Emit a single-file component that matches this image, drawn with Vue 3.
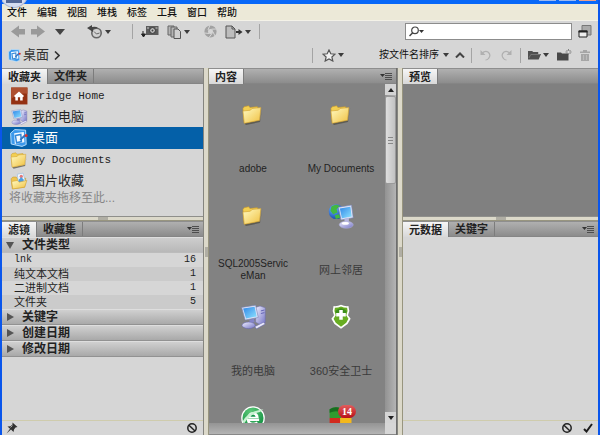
<script setup>
import { ref } from 'vue'

const menus = ['文件', '编辑', '视图', '堆栈', '标签', '工具', '窗口', '帮助']
const favorites = [
  { name: 'Bridge Home', icon: 'home', latin: true },
  { name: '我的电脑', icon: 'computer' },
  { name: '桌面', icon: 'desktop' },
  { name: 'My Documents', icon: 'documents', latin: true },
  { name: '图片收藏', icon: 'pictures' }
]
const selected = ref('桌面')
const types = [
  { name: 'lnk', count: 16, latin: true },
  { name: '纯文本文档', count: 1 },
  { name: '二进制文档', count: 1 },
  { name: '文件夹', count: 5 }
]
const closedGroups = ['关键字', '创建日期', '修改日期']
const files = [
  { name: 'adobe', icon: 'folder' },
  { name: 'My Documents', icon: 'folder' },
  { name: 'SQL2005ServiceMan', icon: 'folder' },
  { name: '网上邻居', icon: 'network', cjk: true },
  { name: '我的电脑', icon: 'computer', cjk: true },
  { name: '360安全卫士', icon: 'shield', cjk: true },
  { name: '', icon: 'browser' },
  { name: '', icon: 'blocks', badge: 14 }
]
const query = ref('')
</script>

<template>
  <div class="window">
    <svg class="defs" aria-hidden="true">
      <defs>
        <linearGradient id="gFolder" x1="0" y1="0" x2="1" y2="1">
          <stop offset="0" stop-color="#fffbc4" /><stop offset="1" stop-color="#f0c040" />
        </linearGradient>
        <linearGradient id="gScreen" x1="0" y1="0" x2="1" y2="1">
          <stop offset="0" stop-color="#2f86e8" /><stop offset="1" stop-color="#8fe4ff" />
        </linearGradient>
        <linearGradient id="gCase" x1="0" y1="0" x2="1" y2="1">
          <stop offset="0" stop-color="#f0f0ff" /><stop offset="1" stop-color="#7474c4" />
        </linearGradient>
        <radialGradient id="gGlobe" cx="0.35" cy="0.3" r="0.8">
          <stop offset="0" stop-color="#6fb8ff" /><stop offset="1" stop-color="#0b3fa8" />
        </radialGradient>
        <radialGradient id="gGreen" cx="0.4" cy="0.2" r="0.9">
          <stop offset="0" stop-color="#5cc878" /><stop offset="1" stop-color="#0b8a3c" />
        </radialGradient>
        <g id="folderArt">
          <path d="M7 25.500 L25 22 L27.500 8 L25 24 L9 27.500z" fill="#4c4a40" opacity="0.7" />
          <path d="M5.500 8.500 L7 6.500 L12 5.500 L13.500 7.500 L22 6.500 L23 10 L22 22 L7 25z" fill="#f3cf52" stroke="#c89a2c" stroke-width="0.700" />
          <path d="M5.500 11.500 L14 10.500 L16 8.500 L26 7.500 L24.500 22 L7 25.500z" fill="url(#gFolder)" stroke="#d0a030" stroke-width="0.700" />
        </g>
      </defs>
      <symbol id="folder" viewBox="1 0 32 32"><use href="#folderArt" /></symbol>
      <symbol id="documents" viewBox="4 3 25 25"><use href="#folderArt" /></symbol>
      <symbol id="computer" viewBox="0 0 32 32">
        <path d="M19 5 L24 3.500 L30 5.500 V22 L25 25 L19 22z" fill="url(#gCase)" stroke="#6d6dab" stroke-width="0.600" />
        <path d="M25 9 L29 8 M25 12 L29 11" stroke="#5a5ab0" />
        <path d="M3 5 L19 2.500 L22 16.500 L7 19.500z" fill="#dfe4f8" stroke="#7783b5" stroke-width="0.700" />
        <path d="M4.700 6.300 L17.800 4.200 L20.200 15.300 L8 17.800z" fill="url(#gScreen)" />
        <path d="M12 19 L17 18 L18 22 L12 23z" fill="#8484c8" />
        <ellipse cx="11" cy="25.500" rx="7.500" ry="3.700" fill="url(#gCase)" stroke="#6464b2" stroke-width="0.600" />
        <path d="M18 27 L28 22 L30 24 L20 29.500z" fill="#e9e9fa" stroke="#6464b2" stroke-width="0.600" />
      </symbol>
      <symbol id="network" viewBox="0 0 32 32">
        <circle cx="10.500" cy="11" r="8.500" fill="url(#gGlobe)" />
        <path d="M5 5 Q11 1 15 5 L11 8 L12 12 L7 14 L4 10z M9 15 L14 14 L15 18 L10 19.500z" fill="#42b842" />
        <path d="M13 6 L28 3.500 L30 18 L16 20.500z" fill="#dfe4f8" stroke="#7783b5" stroke-width="0.700" />
        <path d="M14.700 7.300 L26.700 5.300 L28.200 16.700 L17 18.700z" fill="url(#gScreen)" />
        <path d="M20 19 L25 18 L25 23 L20 24z" fill="#b8b8e0" />
        <ellipse cx="22" cy="26" rx="8" ry="4" fill="url(#gCase)" stroke="#a7a7d4" stroke-width="0.700" />
        <ellipse cx="21" cy="24.500" rx="4" ry="1.600" fill="#fff" />
      </symbol>
      <symbol id="shield" viewBox="0 0 32 32">
        <path d="M16 2 Q20 4 24.500 3.500 L25.500 9 L24 14 L27 18 L23.500 24 L16 29.500 L8.500 24 L5 18 L8 14 L6.500 9 L7.500 3.500 Q12 4 16 2z" fill="#fff" />
        <path d="M16 4 Q19 5.500 23 5.500 L23.500 9 L22 14 L24.500 18 L22 22.500 L16 27 L10 22.500 L7.500 18 L10 14 L8.500 9 L9 5.500 Q13 5.500 16 4z" fill="#68ad22" />
        <path d="M9.500 9 Q16 3 22.500 9 L21 14 L16 18 L11 14z" fill="#3d8f1c" />
        <path d="M14 8 H18 V11.500 H21.500 V15.500 H18 V19 H14 V15.500 H10.500 V11.500 H14z" fill="#fff" />
      </symbol>
      <symbol id="browser" viewBox="0 0 32 32">
        <circle cx="16" cy="16" r="13.500" fill="#fff" />
        <circle cx="16" cy="16" r="12" fill="url(#gGreen)" />
        <path d="M23 18 H10.500 Q11 23 16 23 Q19 23 21 21" fill="none" stroke="#fff" stroke-width="3" />
        <path d="M9.500 16 Q10 9.500 16 9.500 Q22 9.500 22.500 16z" fill="#fff" />
        <path d="M13 14.500 Q14 12 16 12 Q18 12 19 14.500z" fill="#15964a" />
        <path d="M4 20 Q11 8 28 6 L24 9 Q13 11 6 22z" fill="#c9f2d2" />
      </symbol>
      <symbol id="blocks" viewBox="0 0 32 32">
        <path d="M3 6 Q9 2 16 5 V16 H3z" fill="#2f9a2f" />
        <path d="M16 5 H26 V16 H16z" fill="#d83c2c" />
        <path d="M3 16 H15 V27 H3z" fill="#d22a1e" />
        <path d="M15 16 H28 V27 H15z" fill="#f4b81c" />
        <path d="M3 6 Q9 2 16 5 L15 9 Q9 7 3 10z" fill="#176e20" />
      </symbol>
      <symbol id="home" viewBox="0 0 32 32">
        <rect x="2" y="1" width="29" height="30" fill="#943112" />
        <path d="M2 1 H31 V12 Q16 10 2 21z" fill="#ae5030" />
        <path d="M16 8 L25 16 L22.500 18 V24 H18 V18 H14 V24 H9.500 V18 L7 16z" fill="#fff" />
      </symbol>
      <symbol id="desktop" viewBox="2 1 30 30">
        <path d="M3 8 L10 2 L28 3 L29 27 L22 30 L4 26z" fill="#3a98ec" stroke="#c4e6ff" stroke-width="1.500" />
        <path d="M9 8 L25 6 L26 23 L10 26z" fill="#f4faff" />
        <path d="M11 12 L20 10 L21 22 L13 24z" fill="none" stroke="#3288d8" stroke-width="2.500" />
        <path d="M18 18 L26 10 L28 13 L20 20z" fill="#3274c0" />
        <circle cx="29" cy="12" r="2.500" fill="#d83030" />
      </symbol>
      <symbol id="pictures" viewBox="0 0 32 32">
        <path d="M2 12 L5 9 L11 9 L13 12 L28 11 L26 27 L4 30z" fill="#efc550" stroke="#c69728" />
        <path d="M13 4 L23 2 L27 16 L15 19z" fill="#f3faff" stroke="#8eb6dc" />
        <circle cx="20" cy="8" r="3" fill="#e57979" />
        <path d="M15 14 L20 9 L25 14 L22 18 L16 19z" fill="#4d9fe4" />
        <path d="M3 17 L13 15 L16 18 L30 15 L26 27 L5 30z" fill="url(#gFolder)" stroke="#d0a030" />
      </symbol>
      <symbol id="down" viewBox="0 0 6 4"><path d="M0 0 H6 L3 4z" fill="#3c3c3c" /></symbol>
      <symbol id="none" viewBox="0 0 12 12">
        <circle cx="6" cy="6" r="4.200" fill="none" stroke="#222" stroke-width="1.500" />
        <path d="M3 3.200 L9 9" stroke="#222" stroke-width="1.500" />
      </symbol>
      <symbol id="flyout" viewBox="0 0 12 8">
        <path d="M0 2 H5 L2.500 5z" fill="#333" />
        <path d="M5 1.500 H12 M5 3.500 H12 M5 5.500 H12 M5 7.500 H12" stroke="#444" stroke-width="0.900" />
      </symbol>
    </svg>

    <header class="titlebar">
      <span class="orb"><i></i></span>
      <span class="winbtn"></span><span class="winbtn"></span><span class="winbtn close"></span>
    </header>

    <nav class="menubar">
      <button v-for="m in menus" :key="m">{{ m }}</button>
    </nav>

    <div class="toolbar top">
      <div class="group nav">
        <button aria-label="后退"><svg width="14" height="13" viewBox="0 0 14 13"><path d="M0 6.500 L8 0.500 V4 H14 V9.500 H8 V12.500z" fill="#9a9a9a" /></svg></button>
        <button aria-label="前进"><svg width="14" height="13" viewBox="0 0 14 13"><path d="M14 6.500 L6 0.500 V4 H0 V9.500 H6 V12.500z" fill="#9a9a9a" /></svg></button>
        <button class="wide" aria-label="转到"><svg width="10" height="6"><path d="M0 0 H10 L5 6z" fill="#444" /></svg></button>
      </div>
      <button class="group drop history" aria-label="最近">
        <svg width="16" height="14" viewBox="0 0 16 14">
          <circle cx="9.500" cy="8" r="4.700" fill="#d2d2d2" stroke="#666" stroke-width="1.600" />
          <path d="M7 6.500 L9.500 9 L12.500 8" fill="none" stroke="#666" />
          <path d="M0 3 L5 0 V2 Q9 1 11 3 L6 4 L6 7z" fill="#444" />
        </svg>
        <svg width="6" height="4"><use href="#down" /></svg>
      </button>
      <i class="sep"></i>
      <div class="group tools">
        <button aria-label="从相机获取照片">
          <svg width="18" height="13" viewBox="0 0 18 13">
            <path d="M5 1 H17.500 V10 H5z" fill="#5c5c5c" />
            <circle cx="11.500" cy="5.500" r="2.900" fill="#c4c4c4" stroke="#333" />
            <circle cx="11.500" cy="5.500" r="1" fill="#444" />
            <path d="M6 3 H8 M14.500 3 H16.500" stroke="#ccc" />
            <path d="M2 6 V10 M0.500 9 H4.500 L2.500 12z" fill="#222" stroke="#222" />
          </svg>
        </button>
        <button class="drop" aria-label="优化">
          <svg width="15" height="14" viewBox="0 0 15 14">
            <path d="M1 1 H7 V10 H1z" fill="#b5b5b5" stroke="#666" />
            <path d="M4 2 H10 V12 H4z" fill="#b5b5b5" stroke="#666" />
            <path d="M7 4 H11 L13.500 6.500 V13.500 H7z" fill="#d0d0d0" stroke="#555" />
          </svg>
          <svg width="6" height="4"><use href="#down" /></svg>
        </button>
        <button aria-label="在 Camera Raw 中打开">
          <svg width="13" height="13" viewBox="0 0 13 13">
            <circle cx="6.500" cy="6.500" r="4.300" fill="none" stroke="#a2a2a2" stroke-width="3.600" />
            <path d="M6 0 L4 5 M12.500 4 L7.500 4.200 M11 11 L8.800 6.500 M5 12.500 L8 8.500 M0.500 8 L5 8.500" stroke="#d6d6d6" />
          </svg>
        </button>
        <button class="drop" aria-label="输出">
          <svg width="18" height="14" viewBox="0 0 18 14">
            <path d="M1 1 H7 L10 4 V13 H1z" fill="#bdbdbd" stroke="#555" />
            <path d="M7 1 V4 H10" fill="none" stroke="#555" />
            <path d="M11 7 H14" stroke="#333" stroke-width="2" /><path d="M13.500 4 L17.500 7 L13.500 10z" fill="#333" />
          </svg>
          <svg width="6" height="4"><use href="#down" /></svg>
        </button>
      </div>
      <i class="sep"></i>
      <label class="search">
        <svg width="15" height="11" viewBox="0 0 15 11">
          <circle cx="6" cy="4.300" r="3.300" fill="none" stroke="#444" stroke-width="1.200" />
          <path d="M3.700 6.700 L0.500 10" stroke="#444" stroke-width="1.500" /><path d="M10 4 H15 L12.500 7z" fill="#333" />
        </svg>
        <input v-model="query" type="search" aria-label="搜索" />
      </label>
      <button aria-label="切换到紧凑模式">
        <svg width="14" height="13" viewBox="0 0 14 13">
          <path d="M4 0.500 H13 V10 H4z" fill="#aaa" stroke="#777" />
          <path d="M1 6 H9 V12 H1z" fill="#eee" stroke="#222" /><path d="M0.500 6.500 H9.500" stroke="#222" stroke-width="2" />
        </svg>
      </button>
    </div>

    <div class="toolbar path">
      <a class="crumb" href="#"><svg width="13" height="13"><use href="#desktop" /></svg>桌面</a>
      <svg class="chevron" width="6" height="9" viewBox="0 0 6 9"><path d="M1 0.500 L5 4.500 L1 8.500" fill="none" stroke="#333" stroke-width="1.600" /></svg>
      <i class="sep push"></i>
      <button class="drop star" aria-label="按评级筛选项目">
        <svg width="14" height="13" viewBox="0 0 14 13"><path d="M7 1 L8.800 4.800 L13 5.200 L9.900 8 L10.800 12 L7 9.900 L3.200 12 L4.100 8 L1 5.200 L5.200 4.800z" fill="#f1f1f1" stroke="#555" stroke-width="1.200" /></svg>
        <svg width="6" height="4"><use href="#down" /></svg>
      </button>
      <span class="sort">
        <select aria-label="排序方式"><option>按文件名排序</option></select>
        <svg width="6" height="4"><use href="#down" /></svg>
      </span>
      <button class="asc" aria-label="升序"><svg width="10" height="6"><path d="M1 5.500 L5 1.500 L9 5.500" fill="none" stroke="#444" stroke-width="2" /></svg></button>
      <i class="sep"></i>
      <div class="group rotate">
        <button aria-label="逆时针旋转"><svg width="11" height="12" viewBox="0 0 11 12"><path d="M2 4.500 Q5 1 8 3 Q11.500 6 8.500 9.500 Q7.500 11 5.500 11" fill="none" stroke="#b0b0b0" stroke-width="1.200" /><path d="M0.500 1 V6 H5.500z" fill="#b0b0b0" /></svg></button>
        <button aria-label="顺时针旋转"><svg width="11" height="12" viewBox="0 0 11 12"><path d="M9 4.500 Q6 1 3 3 Q-0.500 6 2.500 9.500 Q3.500 11 5.500 11" fill="none" stroke="#b0b0b0" stroke-width="1.200" /><path d="M10.500 1 V6 H5.500z" fill="#b0b0b0" /></svg></button>
      </div>
      <i class="sep"></i>
      <div class="group files">
        <button class="drop" aria-label="打开最近使用的文件">
          <svg width="13" height="10" viewBox="0 0 14 10" preserveAspectRatio="none"><path d="M0 9 V1 H4.500 L5.500 2 H11 V4 H14 L11.500 9.500 H0z" fill="#505050" /><path d="M1 8 L3 4.500 H13" fill="none" stroke="#888" stroke-width="0.700" /></svg>
          <svg width="6" height="4"><use href="#down" /></svg>
        </button>
        <button aria-label="新建文件夹">
          <svg width="15" height="12" viewBox="0 0 15 12"><path d="M0 11.500 V3.500 H4 L5 4.500 H11.500 V11.500z" fill="#484848" /><path d="M11.500 0 V6 M8.500 3 H14.500 M9.500 1 L13.500 5 M13.500 1 L9.500 5" stroke="#777" stroke-width="0.900" /><circle cx="11.500" cy="3" r="1.200" fill="#ddd" /></svg>
        </button>
        <button aria-label="删除项目">
          <svg width="10" height="11" viewBox="0 0 10 11"><path d="M0 1.500 H3 V0 H7 V1.500 H10 V3 H0z M1 4 H9 V11 H1z" fill="#a6a6a6" /><path d="M3.500 5 V10 M6.500 5 V10" stroke="#bbb" /></svg>
        </button>
      </div>
    </div>

    <main class="panes">
      <div class="column">
        <section class="panel">
          <div class="tabs"><button class="active">收藏夹</button><button>文件夹</button></div>
          <ul class="favorites">
            <li v-for="f in favorites" :key="f.name" :class="{ on: f.name === selected }">
              <button :class="{ latin: f.latin }" @click="selected = f.name"><svg width="20" height="18"><use :href="'#' + f.icon" /></svg>{{ f.name }}</button>
            </li>
          </ul>
          <p class="hint">将收藏夹拖移至此...</p>
        </section>
        <div class="split-h"><i></i></div>
        <section class="panel">
          <div class="tabs">
            <button class="active">滤镜</button><button>收藏集</button>
            <button class="flyout" aria-label="滤镜面板菜单"><svg width="12" height="8"><use href="#flyout" /></svg></button>
          </div>
          <button class="filter-head open"><svg width="8" height="8"><path d="M0 1 H8 L4 8z" fill="#555" /></svg>文件类型</button>
          <table class="types">
            <tbody>
              <tr v-for="t in types" :key="t.name"><td :class="{ latin: t.latin }">{{ t.name }}</td><td class="count">{{ t.count }}</td></tr>
            </tbody>
          </table>
          <button v-for="g in closedGroups" :key="g" class="filter-head"><svg width="8" height="8"><path d="M1 0 L8 4 L1 8z" fill="#555" /></svg>{{ g }}</button>
          <footer class="foot">
            <button aria-label="浏览时保持过滤"><svg width="12" height="12" viewBox="0 0 12 12"><path d="M6.500 0.500 L11.500 5 L9.500 5.500 L8 7.500 L7.500 10 L5 7.500 L0.500 11.500 L4 6.800 L1.500 4.500 L4.500 4.200 L6.500 2.500z" fill="#303030" /><path d="M6.500 3.500 L4.500 5.500" stroke="#aaa" /></svg></button>
            <button class="end" aria-label="清除过滤器"><svg width="12" height="12"><use href="#none" /></svg></button>
          </footer>
        </section>
      </div>

      <div class="split-v"><i></i></div>

      <section class="panel content">
        <div class="tabs">
          <button class="active">内容</button>
          <button class="flyout" aria-label="内容面板菜单"><svg width="12" height="8"><use href="#flyout" /></svg></button>
        </div>
        <div class="browser">
          <div class="grid">
            <figure v-for="(f, i) in files" :key="i">
              <span class="thumbnail">
                <svg width="28" height="28" aria-hidden="true"><use :href="'#' + f.icon" /></svg>
                <b v-if="f.badge" class="badge">{{ f.badge }}</b>
              </span>
              <figcaption :class="{ cjk: f.cjk }">{{ f.name }}</figcaption>
            </figure>
          </div>
          <div class="scroll">
            <button aria-label="向上滚动"><svg width="6" height="4"><path d="M0 4 H6 L3 0z" fill="#222" /></svg></button>
            <div class="track"><span class="thumb"><i></i></span></div>
            <button aria-label="向下滚动"><svg width="6" height="4"><path d="M0 0 H6 L3 4z" fill="#222" /></svg></button>
          </div>
        </div>
        <div class="hscroll"><i></i></div>
      </section>

      <div class="split-v"><i></i></div>

      <div class="column">
        <section class="panel preview">
          <div class="tabs"><button class="active">预览</button></div>
        </section>
        <div class="split-h"><i></i></div>
        <section class="panel">
          <div class="tabs">
            <button class="active">元数据</button><button>关键字</button>
            <button class="flyout" aria-label="元数据面板菜单"><svg width="12" height="8"><use href="#flyout" /></svg></button>
          </div>
          <footer class="foot confirm">
            <button class="end" aria-label="取消"><svg width="12" height="12"><use href="#none" /></svg></button>
            <button aria-label="应用"><svg width="10" height="10" viewBox="0 0 10 10"><path d="M1 6 L3.500 8.500 L9 1" fill="none" stroke="#1c1c1c" stroke-width="2" /></svg></button>
          </footer>
        </section>
      </div>
    </main>
  </div>
</template>

<style>
body { margin: 0; }
</style>

<style scoped>
* { box-sizing: border-box; }
.window {
  display: flex;
  flex-direction: column;
  height: 100vh;
  overflow: hidden;
  border: solid #0a56ec;
  border-width: 0 2px;
  background: #d6d6d6;
  color: #222;
  font: 10px/14px "Liberation Sans", "Noto Sans CJK SC", sans-serif;
}
.defs { position: absolute; width: 0; height: 0; }
svg { display: block; flex: none; }
button {
  display: flex;
  align-items: center;
  padding: 0;
  border: 0;
  background: none;
  color: inherit;
  font: inherit;
}
.titlebar {
  position: relative;
  z-index: 1;
  display: flex;
  flex: none;
  justify-content: flex-end;
  gap: 3px;
  height: 4px;
  padding-right: 2px;
  background: #0868f8;
}
.winbtn { width: 17px; height: 1px; background: #9db8f0; }
.winbtn.close { background: #eaa08c; }
.orb {
  position: absolute;
  top: -19px;
  left: -2px;
  width: 28px;
  height: 27px;
  border-radius: 50%;
  border: 1px solid #aeb9d6;
  background: #d5dcf0;
}
.orb i { display: block; width: 16px; height: 3px; margin: 18px 0 0 5px; background: #536694; }

.menubar {
  display: flex;
  flex: none;
  gap: 10px;
  height: 17px;
  padding: 1px 0 0 5px;
  border-bottom: 1px solid #f4f2e8;
  background: #ece9d8;
  color: #111;
}
.menubar button { position: relative; z-index: 2; font-weight: 500; }

.toolbar { display: flex; flex: none; align-items: center; }
.toolbar.top { height: 21px; padding: 0 6px 0 9px; }
.toolbar.path { height: 26px; padding: 0 8px 0 6px; }
.group { display: flex; align-items: center; }
.nav { gap: 6px; }
.nav .wide { margin-left: 4px; }
.drop { gap: 2px; }
.history { margin: 0 21px 0 22px; }
.sep { width: 1px; height: 15px; background: #a4a4a4; }
.tools { gap: 8px; margin: 0 8px; }
.tools button:nth-child(3) { margin-left: 6px; }
.search {
  display: flex;
  align-items: center;
  width: 167px;
  height: 17px;
  margin: 0 6px 0 auto;
  padding-left: 3px;
  border: 1px solid #8c8c8c;
  background: #fff;
}
.search input {
  flex: 1;
  min-width: 0;
  height: 14px;
  padding: 0 4px;
  border: 0;
  outline: 0;
  background: none;
  font: inherit;
  appearance: none;
}
.crumb {
  display: flex;
  align-items: center;
  gap: 2px;
  color: #333;
  font-size: 13px;
  text-decoration: none;
}
.chevron { margin-left: 5px; }
.push { margin-left: auto; }
.star { margin: 0 35px 0 9px; }
.sort { display: flex; align-items: center; gap: 3px; }
.sort select {
  width: 61px;
  padding: 0;
  border: 0;
  background: none;
  color: #111;
  font: inherit;
  appearance: none;
}
.asc { margin: 0 6px; }
.rotate { gap: 10px; margin: 0 8px; }
.files { gap: 8px; margin-left: 7px; }

.panes {
  display: grid;
  flex: 1;
  grid-template-columns: 201fr 6px 188fr 6px 195fr;
  grid-template-rows: minmax(0, 1fr);
  min-height: 0;
}
.column {
  display: grid;
  grid-template-rows: 148fr 5px 214fr;
  min-width: 0;
  min-height: 0;
}
.panel {
  display: flex;
  flex-direction: column;
  min-width: 0;
  min-height: 0;
  overflow: hidden;
}
.split-h, .split-v {
  display: flex;
  align-items: center;
  justify-content: center;
  background: #dcd9ca;
}
.split-h { border-top: 1px solid #8f8f8b; border-bottom: 1px solid #98957f; }
.split-v { border-left: 1px solid #85857f; border-right: 1px solid #98957f; }
.split-h i { width: 10px; height: 3px; background: #b0aea4; }
.split-v i { width: 3px; height: 10px; background: #b0aea4; }

.tabs {
  display: flex;
  flex: none;
  height: 16px;
  border-top: 1px solid #8e8e8e;
  border-bottom: 1px solid #858585;
  background: linear-gradient(#b0b0b0, #8c8c8c);
  font-size: 11px;
  font-weight: 700;
}
.tabs button { padding: 0 6px; border-right: 1px solid #7c7c7c; }
.tabs .active { margin-bottom: -1px; background: linear-gradient(#f6f6f6, #d8d8d8); }
.tabs .flyout { margin-left: auto; padding: 0 4px; border: 0; }

.favorites { margin: 0; padding: 1px 0 0; list-style: none; }
.favorites button {
  gap: 3px;
  width: 100%;
  height: 21px;
  padding-left: 7px;
  font-size: 13px;
}
.favorites .on button { height: 22px; background: #0460a8; color: #fff; }
.favorites .latin { font-family: "Liberation Mono", monospace; font-size: 11px; }
.hint { margin: 0; padding-left: 7px; color: #858585; font-size: 12px; line-height: 14px; }

.filter-head {
  flex: none;
  gap: 8px;
  width: 100%;
  height: 16px;
  padding-left: 4px;
  border-top: 1px solid #dedede;
  border-bottom: 1px solid #929292;
  background: linear-gradient(#d0d0d0, #a9a9a9);
  font-size: 12px;
  font-weight: 700;
}
.filter-head.open { border-bottom-color: #bcbcbc; background: linear-gradient(#cdcdcd, #b8b8b8); }
.types { flex: none; width: 100%; border-collapse: collapse; font-size: 11px; }
.types td { height: 14px; padding: 0 0 0 12px; line-height: 14px; }
.types tr:nth-child(even) { background: #cbcbcb; }
.types .count { padding: 0 7px 0 0; text-align: right; }
.types .latin, .types .count { font-family: "Liberation Mono", monospace; font-size: 10px; }

.foot {
  display: flex;
  flex: none;
  align-items: center;
  height: 15px;
  margin-top: auto;
  padding: 0 5px 0 4px;
  border-top: 1px solid #cfccad;
}
.foot .end { margin-left: auto; }
.confirm { gap: 10px; }

.content { border-right: 1px solid #6e6e6e; background: #828282; }
.browser { display: flex; flex: 1; min-height: 0; }
.grid {
  display: grid;
  flex: 1;
  grid-template-columns: 1fr 1fr;
  grid-auto-rows: 101px;
  min-width: 0;
  overflow: hidden;
}
figure {
  display: flex;
  flex-direction: column;
  align-items: center;
  gap: 28px;
  margin: 0;
  padding-top: 17px;
}
.thumbnail { position: relative; }
.badge {
  position: absolute;
  top: 1px;
  right: -1px;
  width: 18px;
  height: 13px;
  border-radius: 7px;
  background: linear-gradient(#e25c5c, #b80f18);
  color: #fff;
  font-family: "Liberation Serif", serif;
  line-height: 13px;
  text-align: center;
}
figcaption {
  display: flex;
  align-items: center;
  justify-content: center;
  width: 72px;
  height: 24px;
  line-height: 12px;
  text-align: center;
  word-break: break-all;
}
figcaption.cjk { color: #3a3a3a; font-size: 11px; }
.scroll { display: flex; flex: none; flex-direction: column; width: 11px; background: linear-gradient(90deg, #929292, #b4b4b4); }
.scroll button { flex: none; justify-content: center; height: 11px; background: #d4d4d4; }
.track { flex: 1; min-height: 0; padding-top: 1px; }
.thumb {
  display: flex;
  align-items: center;
  justify-content: center;
  height: 28%;
  border: 1px solid #9a9a9a;
  border-radius: 2px;
  background: linear-gradient(90deg, #dedede, #c2c2c2);
}
.thumb i { width: 5px; height: 7px; background: repeating-linear-gradient(#888 0 1px, transparent 1px 3px); }
.hscroll { display: flex; flex: none; height: 12px; padding-right: 11px; border-bottom: 1px solid #888; background: #d6d6d6; }
.hscroll i { flex: 1; background: linear-gradient(#949494, #b4b4b4); }
.preview { background: #808080; }
</style>
